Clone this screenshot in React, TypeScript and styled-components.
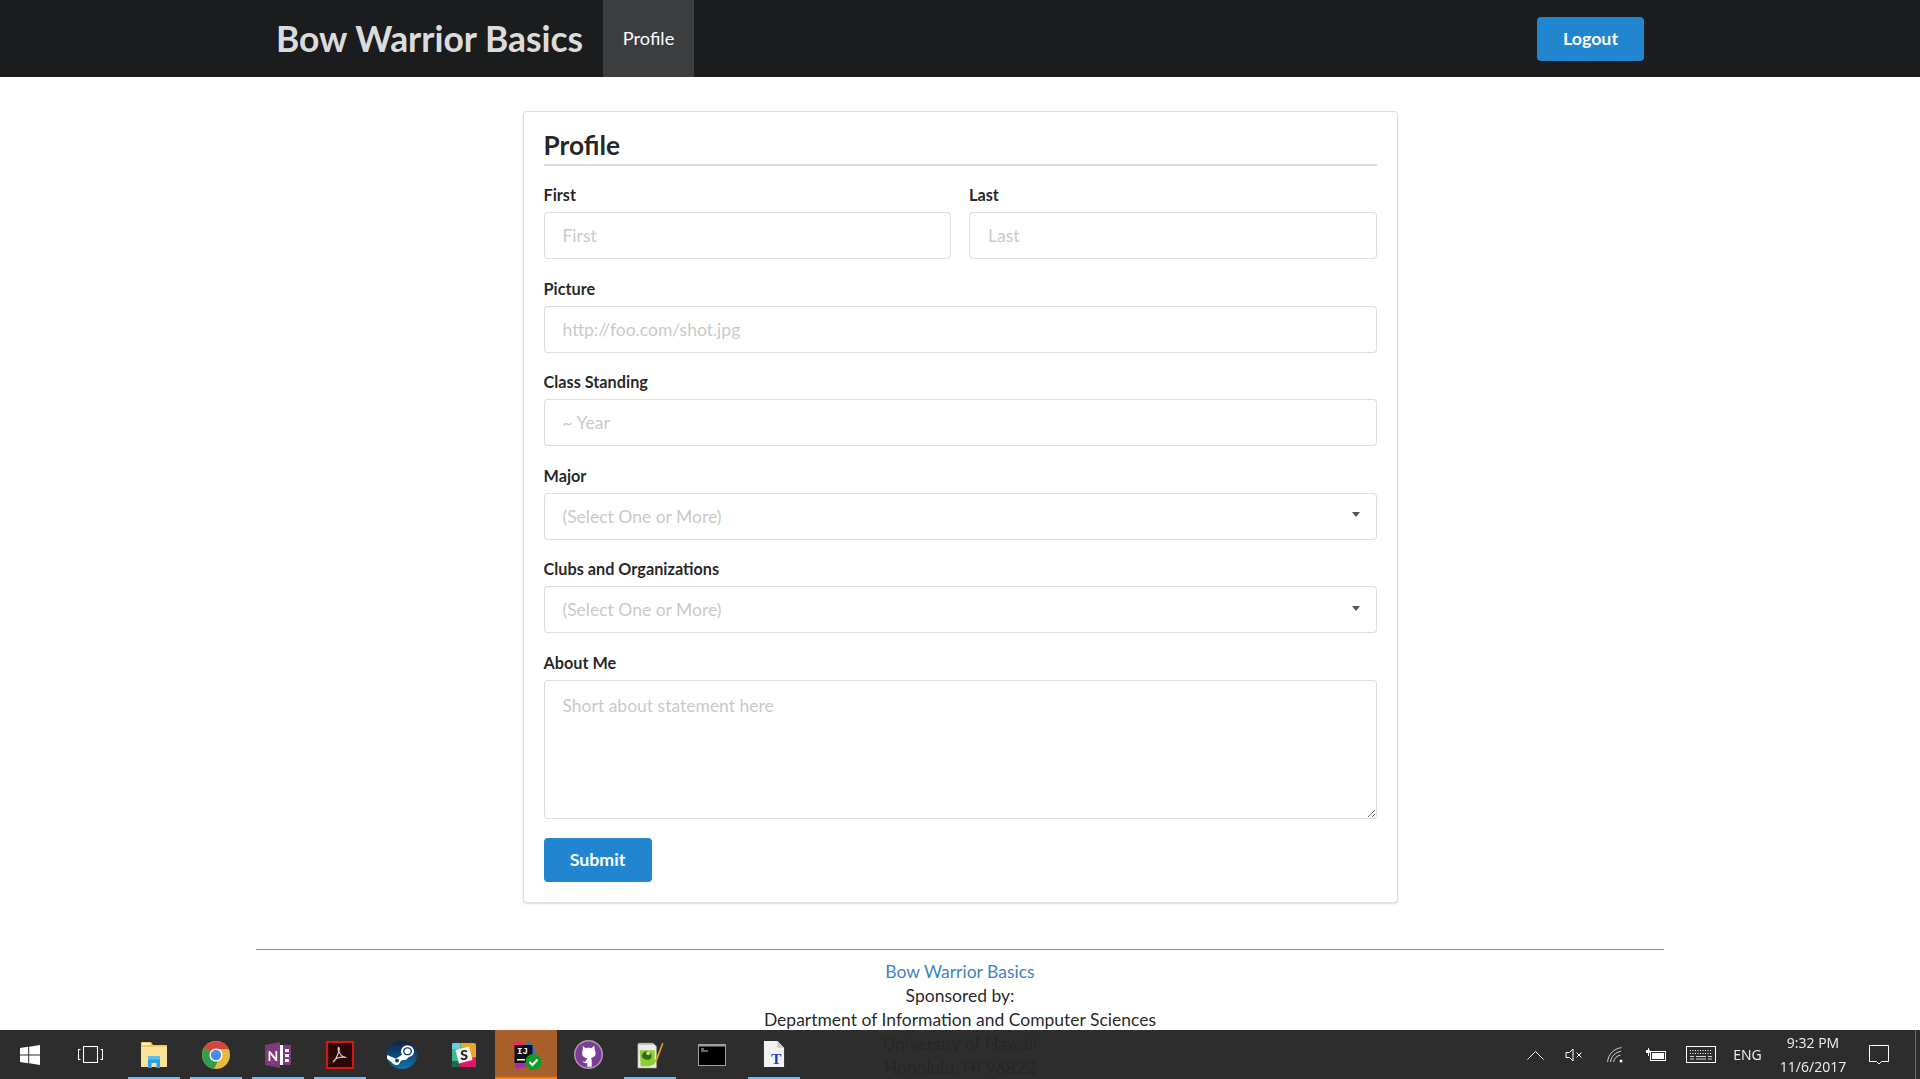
import React from "react";
import styled, { createGlobalStyle } from "styled-components";

const Global = createGlobalStyle`
  html, body { margin: 0; padding: 0; height: 100%; overflow: hidden; background: #fff; }
  body { font-family: Lato, "Liberation Sans", sans-serif; font-size: 17.5px; color: rgba(0,0,0,.87); }
  * { box-sizing: border-box; }
`;

const Page = styled.div`
  height: 1079px;
  overflow: hidden;
`;
const NavBar = styled.header`
  height: 77px;
  background: #1b1c1d;
`;
const NavInner = styled.div`
  width: 1408px;
  height: 100%;
  margin: 0 auto;
  padding: 0 20px 0 0;
  display: flex;
  align-items: stretch;
`;
const Brand = styled.a`
  display: flex;
  align-items: center;
  padding: 0 20px 0 20px;
  font-size: 35.4px;
  font-weight: 700;
  color: rgba(255,255,255,.87);
  white-space: nowrap;
`;
const NavItem = styled.a`
  display: flex;
  align-items: center;
  padding: 0 0 1px;
  width: 91px;
  justify-content: center;
  background: rgba(255,255,255,.15);
  color: #fff;
  font-size: 18.2px;
`;
const NavRight = styled.div`
  margin-left: auto;
  display: flex;
  align-items: center;
`;
const Button = styled.button`
  height: 44px;
  width: ${(p: { $w: number }) => p.$w}px;
  border: 0;
  border-radius: 4px;
  background: #2185d0;
  color: #fff;
  font: 700 17.8px Lato, sans-serif;
  padding: 0 0 2px;
`;
const Card = styled.form`
  width: 875px;
  margin: 34px auto 0;
  padding: 20px;
  background: #fff;
  border: 1px solid rgba(34,36,38,.15);
  border-radius: 4px;
  box-shadow: 0 1px 2px 0 rgba(34,36,38,.15);
  height: 792px;
`;
const Heading = styled.h2`
  margin: 0 0 20px;
  height: 34px;
  font-size: 26.25px;
  line-height: 27px;
  font-weight: 700;
  color: rgba(0,0,0,.87);
  border-bottom: 2px solid rgba(34,36,38,.15);
`;
const Fields = styled.div`
  display: flex;
  flex-direction: column;
  gap: 20.5px;
`;
const TwoCols = styled.div`
  display: grid;
  grid-template-columns: 1fr 1fr;
  gap: 18px;
`;
const Field = styled.div`
  display: flex;
  flex-direction: column;
`;
const Label = styled.label`
  font-size: 16.25px;
  line-height: 18px;
  font-weight: 700;
  margin-bottom: 8px;
  color: rgba(0,0,0,.87);
`;
const controlBox = `
  width: 100%;
  border: 1px solid rgba(34,36,38,.15);
  border-radius: 4px;
  background: #fff;
  font: 400 17.5px Lato, sans-serif;
  padding: 0 18px;
  outline: none;
`;
const Input = styled.input`
  ${controlBox}
  height: 47px;
  &::placeholder { color: rgba(191,191,191,.87); opacity: 1; }
`;
const Select = styled.div`
  ${controlBox}
  height: 47px;
  display: flex;
  align-items: center;
  justify-content: space-between;
  color: rgba(191,191,191,.87);
`;
const Caret = styled.span`
  width: 0;
  height: 0;
  margin: 0 -2.5px 3px 0;
  border-left: 4.5px solid transparent;
  border-right: 4.5px solid transparent;
  border-top: 5px solid #555;
`;
const TextArea = styled.textarea`
  ${controlBox}
  height: 139px;
  display: block;
  padding-top: 13px;
  line-height: 24px;
  resize: vertical;
  &::placeholder { color: rgba(191,191,191,.87); opacity: 1; }
`;
const SubmitRow = styled.div`
  margin-top: 19px;
`;
const Footer = styled.footer`
  width: 1408px;
  margin: 46px auto 0;
  border-top: 1px solid #8f8f8f;
  padding-top: 10px;
  text-align: center;
  font-size: 17.5px;
  line-height: 24px;
`;
const FooterLink = styled.a`
  color: #4183c4;
`;
const FooterLine = styled.div``;

const Taskbar = styled.div`
  position: fixed;
  left: 0;
  right: 0;
  bottom: 0;
  height: 49px;
  background: rgba(37,37,37,.965);
  display: flex;
  align-items: stretch;
  color: #fff;
`;
const WinSlot = styled.div`
  width: 60px;
  flex: none;
  display: flex;
  align-items: center;
  justify-content: center;
`;
const AppGroup = styled.div`
  margin-left: 3px;
  display: flex;
  align-items: stretch;
`;
const AppSlot = styled.div<{ $on?: boolean; $active?: boolean }>`
  position: relative;
  width: 62px;
  flex: none;
  display: flex;
  align-items: center;
  justify-content: center;
  background: ${(p) => (p.$active ? "#a9612b" : "transparent")};
  &::after {
    content: "";
    display: ${(p) => (p.$on || p.$active ? "block" : "none")};
    position: absolute;
    bottom: 0;
    left: ${(p) => (p.$active ? "0" : "5px")};
    right: ${(p) => (p.$active ? "0" : "5px")};
    height: 2px;
    background: ${(p) => (p.$active ? "#ff7a00" : "#76b9ed")};
  }
`;
const Tray = styled.div`
  margin-left: auto;
  display: flex;
  align-items: stretch;
  border-right: 1px solid #6a6a6a;
  margin-right: 4px;
  padding-right: 13px;
`;
const TrayItem = styled.div<{ $w: number }>`
  width: ${(p) => p.$w}px;
  flex: none;
  display: flex;
  align-items: center;
  justify-content: center;
  color: #fff;
`;
const TrayText = styled.span`
  font: 400 14px "Open Sans", "Noto Sans", sans-serif;
  color: #f2f2f2;
`;
const Clock = styled.div`
  font: 400 14px/24px "Open Sans", "Noto Sans", sans-serif;
  text-align: center;
  color: #f2f2f2;
  white-space: nowrap;
`;

const WindowsIcon = () => (
  <svg width="20" height="20" viewBox="0 0 20 20" fill="#fff">
    <path d="M0 3l8.2-1.2v7.7H0zM9.2 1.7L20 0v9.5H9.2zM0 10.5h8.2v7.7L0 17zM9.2 10.5H20V20L9.2 18.3z" />
  </svg>
);
const TaskViewIcon = () => (
  <svg width="25" height="17" viewBox="0 0 25 17" fill="none" stroke="#fff" strokeWidth="1.1">
    <rect x="5.5" y=".5" width="14" height="16" />
    <path d="M2.5 3.500H.5v10h2M22.500 3.500h2v10h-2" />
  </svg>
);
const ExplorerIcon = () => (
  <svg width="28" height="28" viewBox="0 0 28 28">
    <path d="M1 1h10l2 3h14v22H1z" fill="#f4c95d" />
    <path d="M2 2h8v2H2z" fill="#fff3c4" />
    <path d="M1 6h26v20H1z" fill="#fde395" />
    <path d="M8 27v-9h12v9h-3.500v-5h-5v5z" fill="#2f9fe6" />
    <path d="M8 15h12v3.500H8z" fill="#5cbcf6" />
  </svg>
);
const ChromeIcon = () => (
  <svg width="28" height="28" viewBox="0 0 28 28">
    <circle cx="14" cy="14" r="14" fill="#e8b93a" />
    <path d="M14 14L2 7A14 14 0 0 1 26.500 8H14z" fill="#d9453a" />
    <path d="M14 14L2 7A14 14 0 0 0 12 27.900L19 14z" fill="#2f9e4f" />
    <circle cx="14" cy="14" r="6.600" fill="#fff" />
    <circle cx="14" cy="14" r="5.200" fill="#4a8ce8" />
  </svg>
);
const OneNoteIcon = () => (
  <svg width="28" height="28" viewBox="0 0 28 28">
    <path d="M14 4h13v20H14z" fill="#fff" />
    <path d="M19 4h8v20h-8z" fill="#80397b" />
    <path d="M21 8h4v3h-4zM21 13h4v3h-4zM21 18h4v3h-4z" fill="#fff" />
    <path d="M1 4l15-3v26l-15-3z" fill="#80397b" />
    <text x="3.500" y="20" fontFamily="Lato, sans-serif" fontWeight="700" fontSize="14" fill="#fff">N</text>
  </svg>
);
const AcrobatIcon = () => (
  <svg width="28" height="28" viewBox="0 0 28 28">
    <rect x="1" y="1" width="26" height="26" fill="#2a0604" stroke="#e0120b" strokeWidth="2" />
    <path d="M7 21c2-1 4-5 6-11 .6-2 .2-4-.5-3.500-.8 1 0 4 2 7 1.500 2 3.500 3 6 3-3-.6-7-.2-10 1-2 1-3 3-3.500 3.500z" fill="none" stroke="#d9c9c5" strokeWidth="1.200" />
  </svg>
);
const SteamIcon = () => (
  <svg width="30" height="28" viewBox="0 0 30 30" preserveAspectRatio="none">
    <defs>
      <linearGradient id="steamG" x1="0" y1="0" x2="0" y2="1">
        <stop offset="0" stopColor="#0f2148" />
        <stop offset="1" stopColor="#1173a8" />
      </linearGradient>
    </defs>
    <circle cx="15" cy="15" r="15" fill="url(#steamG)" />
    <path d="M0 15l9 4 7-5 7 2-4 4-5 1-2 4c-2 2-6 0-7-2L0 19z" fill="#fff" />
    <circle cx="20.500" cy="11" r="6.500" fill="#fff" />
    <circle cx="20.500" cy="11" r="4.400" fill="#17406f" />
    <circle cx="20.500" cy="11" r="3" fill="#fff" />
    <circle cx="10" cy="21" r="2" fill="#17406f" />
  </svg>
);
const SlackIcon = () => (
  <svg width="24" height="24" viewBox="0 0 24 24">
    <rect x="0" y="0" width="24" height="24" rx="2" fill="#e9a820" />
    <path d="M0 2a2 2 0 0 1 2-2h7v24H2a2 2 0 0 1-2-2z" fill="#3eb890" />
    <path d="M0 2a2 2 0 0 1 2-2h6v6H0z" fill="#70cadb" />
    <path d="M24 14v8a2 2 0 0 1-2 2H8v-7z" fill="#e01765" />
    <path d="M0 18h8v6H2a2 2 0 0 1-2-2z" fill="#1a6b50" />
    <rect x="5" y="5" width="14" height="14" fill="#f4f4f4" transform="rotate(-14 12 12)" />
    <text x="12" y="17" textAnchor="middle" fontFamily="Lato, sans-serif" fontWeight="900" fontSize="14" fill="#222">S</text>
  </svg>
);
const IntellijIcon = () => (
  <svg width="32" height="32" viewBox="0 0 32 32">
    <path d="M2 4l9-2 5 6-9 10z" fill="#f0286a" />
    <path d="M18 2l8 8-3 10-10-10z" fill="#3a6fd8" />
    <path d="M4 20l10-6 2 14-10 2z" fill="#a42bb5" />
    <rect x="4.500" y="6" width="18" height="18" fill="#111" />
    <text x="7" y="15" fontFamily="Liberation Mono, monospace" fontWeight="700" fontSize="9" fill="#fff">IJ</text>
    <rect x="7" y="20" width="8" height="1.500" fill="#fff" />
    <circle cx="23.500" cy="23" r="8" fill="#109b2a" />
    <path d="M19.500 23l3 3 5-5.500" fill="none" stroke="#fff" strokeWidth="2" />
  </svg>
);
const GithubIcon = () => (
  <svg width="29" height="29" viewBox="0 0 30 30">
    <circle cx="15" cy="15" r="15" fill="#a99ab0" />
    <circle cx="15" cy="15" r="13.500" fill="#7d3c98" />
    <path d="M9 6l3 2.500c2-.6 4-.6 6 0L21 6l.6 4.500c1 1.500 1 4 .2 5.500-1 1.500-3 2.500-4.300 2.800.6.5.8 1.200.8 2v6.500c-1.500.4-3.100.4-4.600 0v-3.500c-2 .6-4 0-5-2 1.500.5 2.800 1 3.500 0 .3-1 .8-2 1.500-3-1.800-.3-4-1-4.800-2.800-.7-1.500-.7-4 .2-5.500z" fill="#fff" />
  </svg>
);
const NotepadIcon = () => (
  <svg width="28" height="28" viewBox="0 0 30 30">
    <path d="M2 3h17l3 3v23H2z" fill="#ececec" stroke="#999" strokeWidth=".6" />
    <path d="M4 10h16v15l-6 2H5z" fill="#8fce2e" />
    <path d="M7 14c2-4 7-4 9 0s-1 7-5 6-6-3-4-6z" fill="#2f6d1c" />
    <circle cx="13" cy="13" r="2" fill="#c6e59a" />
    <path d="M3 2h15v2H3z" fill="#bdbdbd" />
    <path d="M20 22L28 2l1.500 .6L22 23z" fill="#d79a22" />
  </svg>
);
const CmdIcon = () => (
  <svg width="28" height="22" viewBox="0 0 28 22">
    <rect x="0" y="0" width="28" height="22" fill="#9aa0a3" />
    <rect x="1" y="2.500" width="26" height="18.500" fill="#000" />
    <path d="M3 4.500h3v1H3zM3 6.500h7v1H3z" fill="#ccc" />
  </svg>
);
const TFileIcon = () => (
  <svg width="23" height="29" viewBox="0 0 24 30">
    <path d="M1 1h14l7 7v20H1z" fill="#f2f2f2" />
    <path d="M15 1l7 7h-7z" fill="#c9c9c9" />
    <text x="14" y="25" textAnchor="middle" fontFamily="Liberation Serif, serif" fontWeight="700" fontSize="16" fill="#2337c6">T</text>
  </svg>
);

const TrayChevron = () => (
  <svg width="17" height="10" viewBox="0 0 17 10" fill="none" stroke="#fff" strokeWidth="1">
    <path d="M.5 9.500l8-8 8 8" />
  </svg>
);
const SpeakerIcon = () => (
  <svg width="19" height="14" viewBox="0 0 19 14" fill="none" stroke="#fff" strokeWidth="1">
    <path d="M1 4.500h3.500L8 1v12L4.500 9.500H1zM11.500 4.500l5 5M16.500 4.500l-5 5" />
  </svg>
);
const WifiIcon = () => (
  <svg width="16" height="16" viewBox="0 0 16 16" fill="none" stroke="#cfcfcf" strokeWidth="1">
    <path d="M.6 15C1 7.500 7 1.500 14.500 .6M3.600 15C4 9.500 8.500 5 14 4.400M6.600 15C7 11.500 10 8.500 13.500 8.200" />
    <circle cx="14" cy="14" r="1.500" fill="#fff" stroke="none" />
  </svg>
);
const BatteryIcon = () => (
  <svg width="20" height="14" viewBox="0 0 20 14">
    <rect x="4.500" y="3.500" width="15" height="9" fill="none" stroke="#fff" />
    <rect x="6" y="5" width="12" height="6" fill="#fff" />
    <path d="M0 2h2V0h1v2h1v3H3v3H2V5H0z" fill="#fff" />
  </svg>
);
const KeyboardIcon = () => (
  <svg width="30" height="17" viewBox="0 0 30 17" fill="none" stroke="#fff">
    <rect x=".5" y=".5" width="29" height="16" />
    <path d="M4 4.500h22M4 7.500h22" strokeDasharray="1 1.500" />
    <path d="M4 10.500h4M10 10.500h10M22 10.500h4M4 13h4M10 13h10M22 13h4" strokeWidth=".8" />
  </svg>
);
const NoteIcon = () => (
  <svg width="20" height="20" viewBox="0 0 20 20" fill="none" stroke="#fff">
    <path d="M.5 .5h19v16h-7l-2.500 2.500-2.500-2.500h-7z" />
  </svg>
);

export default function App() {
  return (
    <Page>
      <Global />
      <NavBar>
        <NavInner>
          <Brand>Bow Warrior Basics</Brand>
          <NavItem>Profile</NavItem>
          <NavRight>
            <Button type="button" $w={107}>Logout</Button>
          </NavRight>
        </NavInner>
      </NavBar>
      <Card onSubmit={(e) => e.preventDefault()}>
        <Heading>Profile</Heading>
        <Fields>
          <TwoCols>
            <Field>
              <Label>First</Label>
              <Input placeholder="First" />
            </Field>
            <Field>
              <Label>Last</Label>
              <Input placeholder="Last" />
            </Field>
          </TwoCols>
          <Field>
            <Label>Picture</Label>
            <Input placeholder="http://foo.com/shot.jpg" />
          </Field>
          <Field>
            <Label>Class Standing</Label>
            <Input placeholder="~ Year" />
          </Field>
          <Field>
            <Label>Major</Label>
            <Select>(Select One or More)<Caret /></Select>
          </Field>
          <Field>
            <Label>Clubs and Organizations</Label>
            <Select>(Select One or More)<Caret /></Select>
          </Field>
          <Field>
            <Label>About Me</Label>
            <TextArea placeholder="Short about statement here" />
          </Field>
        </Fields>
        <SubmitRow>
          <Button type="submit" $w={108}>Submit</Button>
        </SubmitRow>
      </Card>
      <Footer>
        <FooterLine><FooterLink>Bow Warrior Basics</FooterLink></FooterLine>
        <FooterLine>Sponsored by:</FooterLine>
        <FooterLine>Department of Information and Computer Sciences</FooterLine>
        <FooterLine>University of Hawaii</FooterLine>
        <FooterLine>Honolulu, HI 96822</FooterLine>
      </Footer>
      <Taskbar>
        <WinSlot><WindowsIcon /></WinSlot>
        <WinSlot><TaskViewIcon /></WinSlot>
        <AppGroup>
          <AppSlot $on><ExplorerIcon /></AppSlot>
          <AppSlot $on><ChromeIcon /></AppSlot>
          <AppSlot $on><OneNoteIcon /></AppSlot>
          <AppSlot $on><AcrobatIcon /></AppSlot>
          <AppSlot><SteamIcon /></AppSlot>
          <AppSlot><SlackIcon /></AppSlot>
          <AppSlot $active><IntellijIcon /></AppSlot>
          <AppSlot><GithubIcon /></AppSlot>
          <AppSlot $on><NotepadIcon /></AppSlot>
          <AppSlot><CmdIcon /></AppSlot>
          <AppSlot $on><TFileIcon /></AppSlot>
        </AppGroup>
        <Tray>
          <TrayItem $w={36}><TrayChevron /></TrayItem>
          <TrayItem $w={42}><SpeakerIcon /></TrayItem>
          <TrayItem $w={40}><WifiIcon /></TrayItem>
          <TrayItem $w={42}><BatteryIcon /></TrayItem>
          <TrayItem $w={48}><KeyboardIcon /></TrayItem>
          <TrayItem $w={45}><TrayText>ENG</TrayText></TrayItem>
          <TrayItem $w={86}><Clock>9:32 PM<br />11/6/2017</Clock></TrayItem>
          <TrayItem $w={46}><NoteIcon /></TrayItem>
        </Tray>
      </Taskbar>
    </Page>
  );
}
